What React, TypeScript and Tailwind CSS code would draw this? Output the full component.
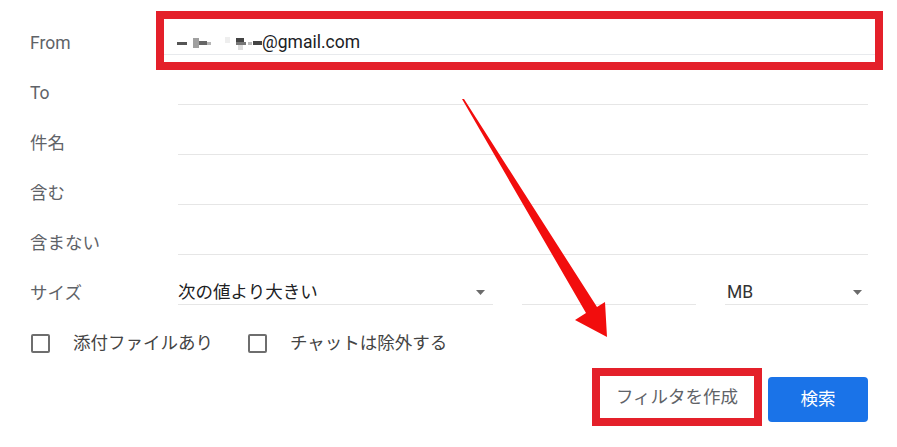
const rows = ["To", "件名", "含む", "含まない"];

function Caret() {
    return (
        <svg width="9" height="5" viewBox="0 0 9 5" className="shrink-0">
            <path d="M0 0 L9 0 L4.5 5 Z" fill="#6b6b6b" />
        </svg>
    );
}

function Checkbox({ label }: { label: string }) {
    return (
        <div className="flex items-center">
            <div className="w-[19px] h-[19px] border-2 border-[#6e6e6e] rounded-[2px]" />
            <span className="ml-[23px] text-[#444]">{label}</span>
        </div>
    );
}

// pixelated redaction in front of the address
function Redacted() {
    return (
        <svg width="87" height="16" viewBox="0 0 87 16" className="shrink-0">
            <rect x="2" y="8" width="10" height="3" fill="#555" />
            <rect x="18" y="4" width="6" height="10" fill="#a0a0a0" />
            <rect x="24" y="7" width="8" height="4" fill="#666" />
            <rect x="32" y="8" width="4" height="3" fill="#b5b5b5" />
            <rect x="50" y="3" width="5" height="6" fill="#eee" />
            <rect x="61" y="4" width="8" height="4" fill="#444" />
            <rect x="61" y="8" width="10" height="3" fill="#777" />
            <rect x="63" y="11" width="5" height="5" fill="#ddd" />
            <rect x="73" y="8" width="4" height="3" fill="#bbb" />
            <rect x="78" y="7" width="9" height="4" fill="#444" />
        </svg>
    );
}

export default function App() {
    return (
        <div className="relative w-[897px] h-[447px] bg-white overflow-hidden text-[17.5px] font-['Roboto','Noto_Sans_CJK_JP',sans-serif] text-[#5f6368]">
            <div className="pt-[18px] pl-[30px] pr-[29px]">
                {/* From */}
                <div className="flex items-center h-[50px]">
                    <div className="w-[126px] shrink-0">From</div>
                    <div className="w-[727px] h-[59px] -mt-[5px] border-[8px] border-[#e4202a] shrink-0">
                        <div className="mt-[11px] h-[25px] border-b border-[#e8eaed] pl-[11px] flex items-center text-[#202124]">
                            <Redacted />
                            <span>@gmail.com</span>
                        </div>
                    </div>
                </div>

                {rows.map((r) => (
                    <div key={r} className="flex items-center h-[50px]">
                        <div className="w-[148px] shrink-0">{r}</div>
                        <div className="flex-1 h-[24px] border-b border-[#e6e6e6]" />
                    </div>
                ))}

                {/* size row */}
                <div className="flex items-center h-[50px]">
                    <div className="w-[148px] shrink-0">サイズ</div>
                    <div className="w-[315px] h-[24px] border-b border-[#e6e6e6] flex items-center justify-between pr-[8px] text-[#202124]">
                        <span>次の値より大きい</span>
                        <Caret />
                    </div>
                    <div className="ml-[29px] w-[174px] h-[24px] border-b border-[#e6e6e6]" />
                    <div className="ml-[29px] flex-1 h-[24px] border-b border-[#e6e6e6] flex items-center justify-between pl-[2px] pr-[6px] text-[#333]">
                        <span>MB</span>
                        <Caret />
                    </div>
                </div>

                {/* checkboxes */}
                <div className="flex items-center h-[50px] pl-[1px] gap-[35px]">
                    <Checkbox label="添付ファイルあり" />
                    <Checkbox label="チャットは除外する" />
                </div>

                {/* buttons */}
                <div className="flex items-center justify-end h-[58px] gap-[6px]">
                    <div className="w-[170px] h-[58px] border-[8px] border-[#e4202a] flex items-center justify-center">
                        <span className="text-[#5f6368]">フィルタを作成</span>
                    </div>
                    <button className="w-[100px] h-[45px] mt-[5px] rounded-[4px] bg-[#1a73e8] text-white">
                        検索
                    </button>
                </div>
            </div>

            {/* annotation arrow */}
            <svg
                width="897"
                height="447"
                viewBox="0 0 897 447"
                className="absolute inset-0 pointer-events-none"
            >
                <polygon
                    points="462,99 464,99 597,307 605,302 607,337 575,320 586,313"
                    fill="#f20d0d"
                />
            </svg>
        </div>
    );
}
